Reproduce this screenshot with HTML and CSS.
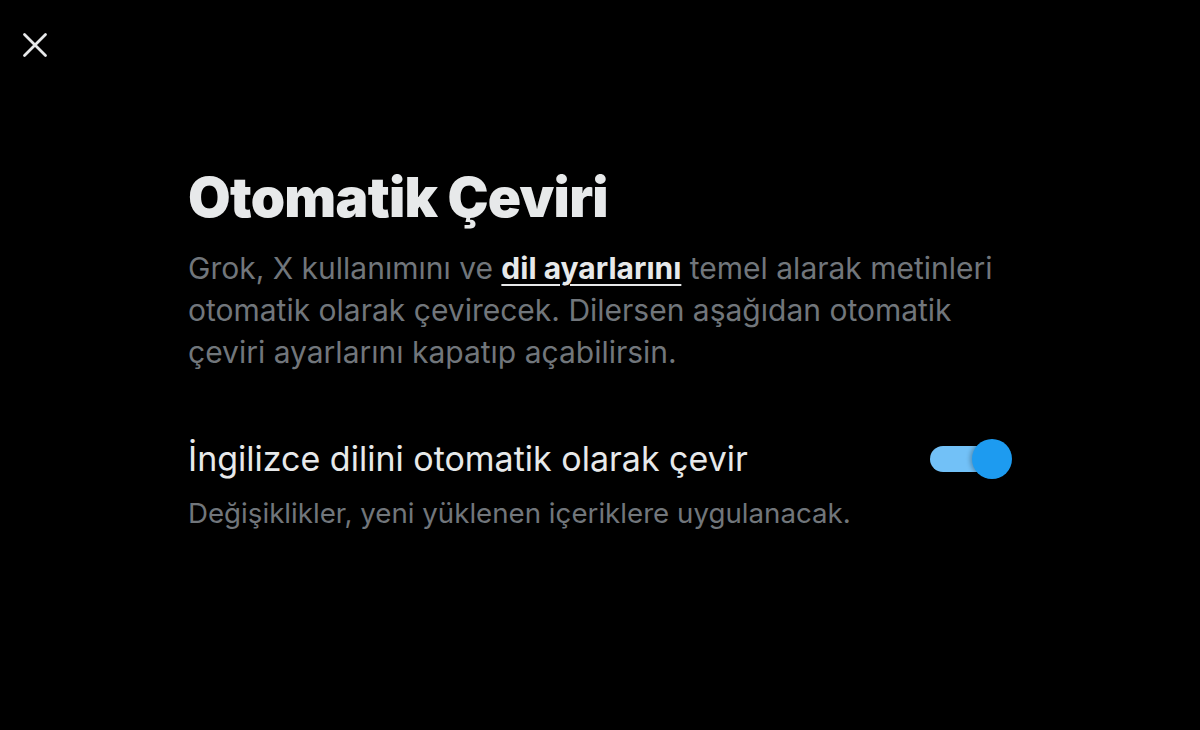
FILE: index.html
```html
<!DOCTYPE html>
<html lang="tr">
<head>
<meta charset="utf-8">
<title>Otomatik Çeviri</title>
<link rel="stylesheet" href="styles.css">
</head>
<body>
<div class="page">
  <header class="topbar">
    <button class="close" aria-label="Kapat">
      <svg viewBox="0 0 24 24" width="28" height="28"><path d="M3 3 L21 21 M21 3 L3 21" stroke="#e7e9ea" stroke-width="2.4" stroke-linecap="round" fill="none"/></svg>
    </button>
  </header>
  <main class="content">
    <h1 class="title">Otomatik Çeviri</h1>
    <p class="desc">Grok, X kullanımını ve <a href="#" class="link">dil ayarlarını</a> temel alarak metinleri otomatik olarak çevirecek. Dilersen aşağıdan otomatik çeviri ayarlarını kapatıp açabilirsin.</p>
    <div class="setting">
      <div class="setting-text">
        <div class="setting-label">İngilizce dilini otomatik olarak çevir</div>
        <div class="setting-note">Değişiklikler, yeni yüklenen içeriklere uygulanacak.</div>
      </div>
      <div class="toggle">
        <span class="track"></span>
        <span class="knob"></span>
      </div>
    </div>
  </main>
</div>
</body>
</html>
```
FILE: styles.css
```css
html, body {
  margin: 0;
  padding: 0;
  background: #000;
  height: 100%;
}
body {
  font-family: Inter, "Noto Sans", sans-serif;
  color: #e7e9ea;
}
.page {
  width: 1200px;
  height: 730px;
}
.topbar {
  height: 90px;
  padding-left: 21px;
  padding-top: 31px;
  box-sizing: border-box;
}
.close {
  background: none;
  border: 0;
  padding: 0;
  width: 28px;
  height: 28px;
  display: block;
  cursor: pointer;
}
.content {
  margin-left: 188px;
  width: 824px;
}
.title {
  margin: 73px 0 0 0;
  font-size: 55px;
  font-weight: 900;
  line-height: 68px;
  letter-spacing: -0.7px;
  color: #e7e9ea;
}
.desc {
  margin: 16px 0 0 0;
  font-size: 30px;
  line-height: 42px;
  color: #71767b;
  width: 824px;
}
.link {
  color: #e7e9ea;
  font-weight: 700;
  text-decoration: underline;
  text-underline-offset: 5px;
  text-decoration-thickness: 2px;
}
.setting {
  display: flex;
  align-items: flex-start;
  justify-content: space-between;
  margin-top: 64px;
}
.setting-label {
  font-size: 34px;
  line-height: 44px;
  color: #e7e9ea;
}
.setting-note {
  margin-top: 14px;
  font-size: 27.7px;
  line-height: 36px;
  color: #71767b;
}
.toggle {
  position: relative;
  width: 82px;
  height: 40px;
  margin-top: 2px;
}
.track {
  position: absolute;
  left: 0;
  top: 7px;
  width: 74px;
  height: 26px;
  border-radius: 13px;
  background: #72c1f7;
}
.knob {
  position: absolute;
  right: 0;
  top: 0;
  width: 40px;
  height: 40px;
  border-radius: 50%;
  background: #1d9bf0;
  box-shadow: -2px 0 4px rgba(0,0,0,0.25);
}
```
